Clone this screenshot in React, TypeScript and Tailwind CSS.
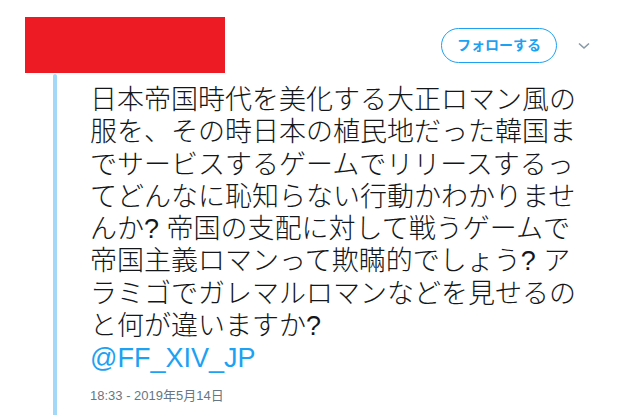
import React from 'react';

const lines = [
  '日本帝国時代を美化する大正ロマン風の',
  '服を、その時日本の植民地だった韓国ま',
  'でサービスするゲームでリリースするっ',
  'てどんなに恥知らない行動かわかりませ',
  'んか? 帝国の支配に対して戦うゲームで',
  '帝国主義ロマンって欺瞞的でしょう? ア',
  'ラミゴでガレマルロマンなどを見せるの',
  'と何が違いますか?',
];

const App: React.FC = () => {
  return (
    <div
      className="w-[628px] h-[415px] bg-white overflow-hidden"
      style={{ fontFamily: '"Liberation Sans", "Noto Sans CJK JP", sans-serif' }}
    >
      {/* header */}
      <div className="flex items-start pt-[17px] pl-[25px] h-[74px]">
        <div className="w-[200px] h-[56px] bg-[#ed1c24]" />
        <div className="ml-auto flex items-center mt-[11px] mr-[38px]">
          <button className="w-[116px] h-[35px] rounded-full border border-[#1da1f2] text-[#1da1f2] text-[14px] font-bold flex items-center justify-center">
            フォローする
          </button>
          <svg className="ml-[21px]" width="12" height="8" viewBox="0 0 12 8" fill="none">
            <path d="M1 1.5 L6 6 L11 1.5" stroke="#8899a6" strokeWidth="1.6" />
          </svg>
        </div>
      </div>

      {/* body */}
      <div className="flex h-[341px]">
        <div className="ml-[53px] w-[4px] rounded-t-full bg-[#a3d8f8]" />
        <div className="ml-[33px] pt-[10px]">
          <div className="text-[27px] font-light leading-[32.3px] text-[#14171a]">
            {lines.map((l, i) => (
              <div key={i} className="whitespace-nowrap">{l}</div>
            ))}
            <div className="text-[#1da1f2]">@FF_XIV_JP</div>
          </div>
          <div className="mt-[11px] text-[13px] text-[#657786]">18:33 - 2019年5月14日</div>
        </div>
      </div>
    </div>
  );
};

export default App;
